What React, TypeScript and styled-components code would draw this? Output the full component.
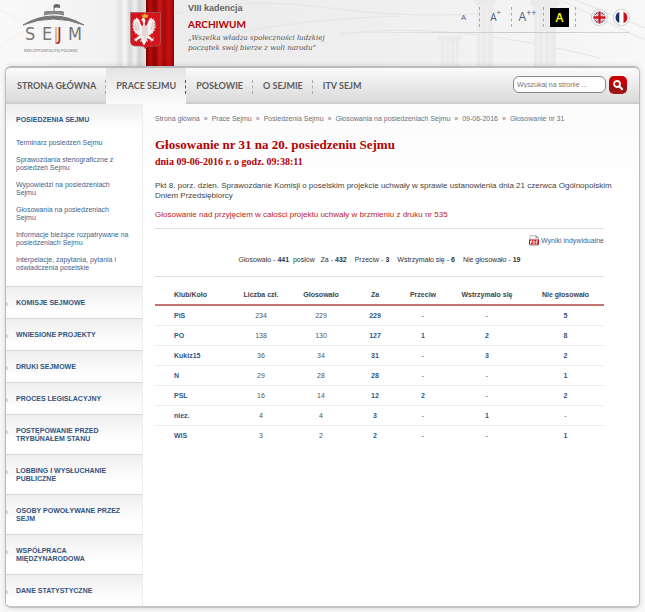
import React from 'react';
import styled, { createGlobalStyle } from 'styled-components';

const sans = '"Liberation Sans", Arial, sans-serif';
const display = 'Lato, "Open Sans", sans-serif';
const blue = '#3f5f8c';
const red = '#b30000';

const GlobalStyle = createGlobalStyle`
  * { box-sizing: border-box; }
  body {
    margin: 0;
    background: #f8f8f8;
    font-family: ${sans};
    font-size: 7px;
    line-height: 8px;
    color: #444;
  }
  a { color: inherit; text-decoration: none; }
  h1, h2, p, ul { margin: 0; padding: 0; }
  ul { list-style: none; }
`;

const Page = styled.div`
  position: relative;
  padding: 0 5px 5px;
`;

const Backdrop = styled.svg`
  position: absolute;
  top: 0;
  right: 0;
  width: 100%;
  height: 104px;
`;

const Header = styled.header`
  position: relative;
  display: flex;
  height: 66px;
`;

const LogoLink = styled.a`
  width: 103px;
  padding-left: 16px;
`;

const BannerArt = styled.svg`
  flex: none;
  width: 66px;
  height: 66px;
`;

const Motto = styled.div`
  flex: 1;
  padding: 3px 0 0 14px;
`;

const Term = styled.p`
  font-weight: 700;
  font-size: 9px;
  line-height: 10px;
  color: #666;
`;

const Archive = styled.p`
  margin-top: 4px;
  font: 700 10px/14px ${display};
  color: ${red};
`;

const Quote = styled.p`
  margin-top: 2px;
  font: italic 7px/10px "DejaVu Serif", serif;
  white-space: nowrap;
  color: #555;
`;

const Tools = styled.div`
  flex: none;
  display: flex;
  align-items: center;
  align-self: flex-start;
  height: 33px;
  width: 290px;
  margin-right: 10px;
  padding-top: 2px;
  justify-content: flex-end;
  border-bottom: 1px solid;
  border-image: linear-gradient(90deg, transparent, #c8c8c8 60%, #d8d8d8) 1;
`;

const SizeButton = styled.button<{ $size: number }>`
  display: flex;
  align-items: center;
  justify-content: center;
  width: 32px;
  height: 20px;
  padding: 0;
  border: 0;
  border-right: 1px dashed #aaa;
  background: none;
  color: ${blue};
  font: ${p => p.$size}px/14px "Open Sans", sans-serif;
  sup { align-self: flex-start; font-size: ${p => p.$size - 3}px; line-height: 12px; }
`;

const ContrastMark = styled.span`
  width: 19px;
  height: 19px;
  background: #000;
  color: #ff0;
  font: 600 12px/19px "Open Sans", sans-serif;
  text-align: center;
`;

const Flags = styled.div`
  display: flex;
  gap: 5px;
  margin-left: 15px;
  svg { display: block; }
`;

const Panel = styled.div`
  position: relative;
  border: 1px solid #bbb;
  border-top-width: 2px;
  border-bottom: 2px solid #c6c6c6;
  border-radius: 6px;
  background: #fff;
  box-shadow: 0 0 5px rgba(0, 0, 0, 0.15);
  overflow: hidden;
`;

const Nav = styled.nav`
  display: flex;
  align-items: center;
  height: 36px;
  padding-left: 1px;
  border-bottom: 2px solid #ccc;
  background: linear-gradient(#fbfbfb, #dadada);
`;

const NavLink = styled.a<{ $active?: boolean }>`
  display: flex;
  align-items: center;
  position: relative;
  height: 36px;
  margin-bottom: -2px;
  padding: 0 10px;
  background: ${p => (p.$active ? 'linear-gradient(#e4e4e4, #fafafa)' : 'none')};
  font: 700 9px/14px ${display};
  color: #5d5d5d;
  &:not(:nth-child(5))::after {
    content: '';
    position: absolute;
    right: 0;
    top: 12px;
    height: 14px;
    border-right: 1px dashed ${p => (p.$active ? '#555' : '#aaa')};
  }
`;

const Search = styled.form`
  display: flex;
  gap: 3px;
  margin: 0 12px 0 auto;
`;

const SearchInput = styled.input`
  width: 93px;
  height: 17px;
  padding: 0 3px;
  border: 1px solid #888;
  border-radius: 6px;
  background: #fff;
  font: 7px/10px ${sans};
  &::placeholder { color: #777; opacity: 1; }
`;

const SearchButton = styled.button`
  width: 18px;
  height: 18px;
  padding: 0;
  border: 0;
  border-radius: 5px;
  background: linear-gradient(#c80000 50%, #8f1212 55%, #a31515);
  svg { display: block; margin: auto; }
`;

const Columns = styled.div`
  display: flex;
`;

const Sidebar = styled.nav`
  flex: none;
  width: 137px;
  border-right: 1px solid #eee;
`;

const Section = styled.section`
  position: relative;
  padding: 12px 10px 11px;
  border-bottom: 1px solid #d6d6d6;
  background: linear-gradient(#eee, #fff 26px);
  &:last-child { border-bottom: 0; }
`;

const SectionLink = styled.a<{ $arrow?: boolean }>`
  display: block;
  font-weight: 700;
  color: #33557f;
  ${p => p.$arrow && `
    &::before {
      content: '';
      position: absolute;
      left: 0;
      top: 14px;
      border: 3px solid transparent;
      border-left-color: #d5d5d5;
      border-right-width: 0;
    }
  `}
`;

const SubList = styled.ul`
  display: flex;
  flex-direction: column;
  gap: 9px;
  padding: 15px 0 3px;
  color: ${blue};
  white-space: pre;
`;

const Main = styled.main`
  flex: 1;
  min-width: 0;
  padding: 11px 35px 20px 12px;
  background: linear-gradient(#fbfbfb, #fff 90px);
`;

const Crumbs = styled.nav`
  display: flex;
  gap: 4px;
  color: #6b7280;
`;

const Title = styled.h1`
  margin-top: 14px;
  font: 700 13px/16px "Liberation Serif", serif;
  color: ${red};
`;

const Subtitle = styled.h2`
  margin-top: 3px;
  font: 700 10px/12px "Liberation Serif", serif;
  color: ${red};
`;

const Lead = styled.p`
  margin-top: 13px;
  font-size: 8px;
  line-height: 10px;
  white-space: pre;
`;

const Subject = styled.p`
  margin: 9px 0 8px;
  font-size: 8px;
  line-height: 10px;
  color: #b22;
`;

const Summary = styled.section`
  display: flex;
  flex-direction: column;
  padding: 6px 0 12px;
  border-top: 1px solid #ddd;
  border-bottom: 1px solid #ddd;
`;

const PdfLink = styled.a`
  display: flex;
  align-items: center;
  align-self: flex-end;
  gap: 2px;
  color: ${blue};
`;

const Totals = styled.p`
  display: flex;
  justify-content: center;
  gap: 8px;
  margin-top: 10px;
  color: #333;
`;

const Results = styled.table`
  width: 100%;
  margin-top: 10px;
  table-layout: fixed;
  border-collapse: collapse;
  text-align: center;
  color: #555;
  th, td { height: 20px; padding: 1px 0 0; }
  thead th { height: 18px; padding: 0 0 1px; color: #444; border-bottom: 2px solid #c47373; }
  tbody tr { border-bottom: 1px solid #eee; }
  tbody tr:last-child { border-bottom: 0; }
  th:first-child { padding-left: 19px; text-align: left; }
  tbody th { color: #33557f; }
`;

const Col = styled.col<{ $w: number }>`
  width: ${p => p.$w}px;
`;

const Count = styled.a`
  font-weight: 700;
  color: #33557f;
`;

const subItems = [
  'Terminarz posiedzeń Sejmu',
  'Sprawozdania stenograficzne z\nposiedzeń Sejmu',
  'Wypowiedzi na posiedzeniach\nSejmu',
  'Głosowania na posiedzeniach\nSejmu',
  'Informacje bieżące rozpatrywane na\nposiedzeniach Sejmu',
  'Interpelacje, zapytania, pytania i\noświadczenia poselskie',
];

const sections = [
  'KOMISJE SEJMOWE', 'WNIESIONE PROJEKTY', 'DRUKI SEJMOWE', 'PROCES LEGISLACYJNY',
  'POSTĘPOWANIE PRZED TRYBUNAŁEM STANU', 'LOBBING I WYSŁUCHANIE PUBLICZNE',
  'OSOBY POWOŁYWANE PRZEZ SEJM', 'WSPÓŁPRACA MIĘDZYNARODOWA', 'DANE STATYSTYCZNE',
];

const crumbs = ['Strona główna', 'Prace Sejmu', 'Posiedzenia Sejmu', 'Głosowania na posiedzeniach Sejmu', '09-06-2016', 'Głosowanie nr 31'];
const navItems = ['STRONA GŁÓWNA', 'PRACE SEJMU', 'POSŁOWIE', 'O SEJMIE', 'ITV SEJM'];
const headings = ['Klub/Koło', 'Liczba czł.', 'Głosowało', 'Za', 'Przeciw', 'Wstrzymało się', 'Nie głosowało'];
const widths = [76, 60, 60, 48, 48, 80, 77];
const rows = [
  ['PiS', '234', '229', '229', '-', '-', '5'],
  ['PO', '138', '130', '127', '1', '2', '8'],
  ['Kukiz15', '36', '34', '31', '-', '3', '2'],
  ['N', '29', '28', '28', '-', '-', '1'],
  ['PSL', '16', '14', '12', '2', '-', '2'],
  ['niez.', '4', '4', '3', '-', '1', '-'],
  ['WiS', '3', '2', '2', '-', '-', '1'],
];

const Pillars = () => (
  <Backdrop viewBox="0 0 645 104" preserveAspectRatio="xMaxYMin slice" aria-hidden="true">
    <defs>
      <linearGradient id="sky" x1="0" x2="1">
        <stop offset="0" stopColor="#f9f9f9" />
        <stop offset=".3" stopColor="#ececec" />
        <stop offset=".6" stopColor="#efefef" />
        <stop offset="1" stopColor="#f8f8f8" />
      </linearGradient>
    </defs>
    <rect width="645" height="104" fill="url(#sky)" />
    <g fill="none" stroke="#e5e5e5">
      <path d="M175 14Q240 -4 330 8T500 12M190 45Q270 20 400 16M340 34Q450 20 600 58M560 0L645 40M575 0L645 28" />
      <path d="M0 46L40 20M0 10L60 40M70 20L108 50" stroke="#f0f0f0" />
    </g>
    <g fill="#ebebeb">
      <path d="M438 36h24v3l-3 3v24h-18V42l-3-3zM474 0h22v3l-3 3v60h-16V6l-3-3zM530 0h30v4l-4 3v59h-22V7l-4-3zM212 52h18v14h-16z" />
    </g>
    <path d="M445 42v24M450 42v24M455 42v24M481 6v60M487 6v60M538 7v59M544 7v59M550 7v59" stroke="#f3f3f3" />
  </Backdrop>
);

const Logo = () => (
  <svg width="72" height="56" viewBox="21 0 72 56" role="img" aria-label="Sejm">
    <path d="M23 25Q53 7 84 25Q53 13 23 25Z" fill="#777" stroke="#777" />
    <path d="M44 15.500v-3q0-1.500 2-1.500h16q2 0 2 1.500v3Q54 13 44 15.500Z" fill="#888" />
    <path d="M54 12V5" stroke="#777" />
    <path d="M54 5q2-2 6 0v3q-3-1-6 0z" fill="#666" />
    <g fill="#777" fontFamily='"DejaVu Sans Condensed", "Open Sans", sans-serif' fontSize="18">
      <text x="25" y="40">S</text>
      <text x="42" y="40">E</text>
      <text x="57" y="40" fill="#b01c24">J</text>
      <text x="68" y="40">M</text>
    </g>
    <path d="M56 27v17" stroke="#d66" />
    <text x="24" y="52" fontSize="4" fill="#666" fontFamily="Open Sans, sans-serif">RZECZYPOSPOLITEJ POLSKIEJ</text>
  </svg>
);

const Banner = () => (
  <BannerArt viewBox="108 0 66 66" aria-hidden="true">
    <defs>
      <linearGradient id="cloth" x1="0" x2="1">
        <stop offset="0" stopColor="#700" />
        <stop offset=".15" stopColor="#b80d0d" />
        <stop offset=".32" stopColor="#8d0505" />
        <stop offset=".5" stopColor="#d01616" />
        <stop offset=".65" stopColor="#a00a0a" />
        <stop offset=".82" stopColor="#ca1111" />
        <stop offset="1" stopColor="#900" />
      </linearGradient>
      <linearGradient id="linen" x1="0" x2="1">
        <stop offset="0" stopColor="#f1f1f1" />
        <stop offset=".2" stopColor="#e3e3e3" />
        <stop offset=".35" stopColor="#f7f7f7" />
        <stop offset=".5" stopColor="#d6d6d6" />
        <stop offset=".65" stopColor="#efefef" />
        <stop offset=".8" stopColor="#d0d0d0" />
        <stop offset="1" stopColor="#e6e6e6" />
      </linearGradient>
    </defs>
    <rect x="114" width="32" height="66" fill="url(#linen)" />
    <rect x="146" width="28" height="66" fill="url(#cloth)" />
    <path d="M130.500 12.500h30v29q0 4-4 4.500h-6q-4 0-5 3-1-3-5-3h-6q-4-.5-4-4.500z" fill="#d4141c" stroke="#a86060" strokeWidth=".7" />
    <path d="M145 18q-2-1-3 1l-1.500 1 2 .8q0 2 .8 3.200l-1 2.500q-2-2-2.500-5-1-3-3.500-4l-.5 2-1.500-1v2.500l-1.500-.5.8 3-1.400 0 1.200 3-1.200.5 1.800 2.500-1 .8 2.400 1.700-.8 1.200 2.900.6-.4 1.400 2.800-.5-3.900 3.800-2.500.3 1.500 1-.8 1.700 2-.9.6 1.600.8-2.500 3.900-1.700-1.500 4 1.700-1 1 2.500 1.300 2 1.300-2 1-2.500 1.700 1-1.500-4 3.900 1.700.8 2.500.6-1.600 2 .9-.8-1.700 1.500-1-2.500-.3-3.900-3.800 2.800.5-.4-1.400 2.900-.6-.8-1.200 2.400-1.700-1-.8 1.800-2.500-1.200-.5 1.200-3h-1.400l.8-3-1.500.5V18.500l-1.500 1-.5-2q-2.500 1-3.500 4-.5 3-2.500 5l-1-2.500q1.500-3 .2-5-.5-1.500-2-1z" fill="#f1efef" />
    <path d="M137 22l2 8M135 23l2 7M133.500 25l3 6M153 22l-2 8M155 23l-2 7M156.500 25l-3 6M145 25v14M143 27v9M147 27v9" stroke="#c88b8b" strokeWidth=".5" fill="none" />
    <path d="M142.500 17.500l-.5-3 1.500 1 1.500-2 1.500 2 1.500-1-.5 3zM135.500 38l2-1.500M154.500 38l-2-1.500" fill="#eab12c" stroke="#dda32b" strokeWidth=".5" />
  </BannerArt>
);

const UkFlag = () => (
  <svg width="17" height="17" viewBox="0 0 17 17" role="img" aria-label="English">
    <clipPath id="uk"><circle cx="8.500" cy="8.500" r="6" /></clipPath>
    <circle cx="8.500" cy="8.500" r="8" fill="#fff" stroke="#ccc" />
    <g clipPath="url(#uk)">
      <path d="M0 0h17v17H0z" fill="#274079" />
      <path d="M1 3l15 11M16 3L1 14" stroke="#fff" strokeWidth="2.500" />
      <path d="M1 3l15 11M16 3L1 14" stroke="#c22" />
      <path d="M8.500 0v17M0 8.500h17" stroke="#fff" strokeWidth="4" />
      <path d="M8.500 0v17M0 8.500h17" stroke="#c9151b" strokeWidth="2.400" />
    </g>
  </svg>
);

const FrFlag = () => (
  <svg width="17" height="17" viewBox="0 0 17 17" role="img" aria-label="Français">
    <clipPath id="fr"><circle cx="8.500" cy="8.500" r="6" /></clipPath>
    <circle cx="8.500" cy="8.500" r="8" fill="#fff" stroke="#ccc" />
    <g clipPath="url(#fr)">
      <path d="M2 0h4.500v17H2z" fill="#1b2f6b" />
      <path d="M6.500 0h4v17h-4z" fill="#fff" />
      <path d="M10.500 0H15v17h-4.500z" fill="#c8141c" />
    </g>
  </svg>
);

const PdfIcon = () => (
  <svg width="10" height="11" viewBox="0 0 10 11" aria-hidden="true">
    <path d="M1 .5h5.500L9.500 3v7.500H1z" fill="#f2f2f2" stroke="#aaa" strokeWidth=".7" />
    <path d="M6.500 0v3H10" fill="#999" />
    <path d="M0 4.500h10v5H0z" fill="#c40f1d" />
    <path d="M1.500 9V5.800H3v1.500H1.500M4.300 5.800v2.700H5q1-.2 1-1.300T5 5.800zM7.300 9V5.800H9M7.300 7.300h1.300" fill="none" stroke="#fff" strokeWidth=".8" />
  </svg>
);

export default function App() {
  return (
    <Page>
      <GlobalStyle />
      <Pillars />
      <Header>
        <LogoLink href="#"><Logo /></LogoLink>
        <Banner />
        <Motto>
          <Term>VIII kadencja</Term>
          <Archive>ARCHIWUM</Archive>
          <Quote>„Wszelka władza społeczności ludzkiej<br />początek swój bierze z woli narodu”</Quote>
        </Motto>
        <Tools>
          <SizeButton $size={8}>A</SizeButton>
          <SizeButton $size={10}>A<sup>+</sup></SizeButton>
          <SizeButton $size={12}>A<sup>++</sup></SizeButton>
          <SizeButton $size={12} aria-label="Wysoki kontrast"><ContrastMark>A</ContrastMark></SizeButton>
          <Flags>
            <a href="#"><UkFlag /></a>
            <a href="#"><FrFlag /></a>
          </Flags>
        </Tools>
      </Header>
      <Panel>
        <Nav>
          {navItems.map((item, i) => <NavLink key={item} href="#" $active={i === 1}>{item}</NavLink>)}
          <Search onSubmit={e => e.preventDefault()}>
            <SearchInput type="text" placeholder="Wyszukaj na stronie ..." aria-label="Wyszukaj na stronie" />
            <SearchButton type="submit" aria-label="Szukaj">
              <svg width="12" height="12" viewBox="0 0 12 12" fill="none" stroke="#fff" strokeWidth="1.800" strokeLinecap="round">
                <circle cx="5" cy="5" r="3" />
                <path d="M7.500 7.500L10 10" strokeWidth="2.200" />
              </svg>
            </SearchButton>
          </Search>
        </Nav>
        <Columns>
          <Sidebar>
            <Section>
              <SectionLink href="#">POSIEDZENIA SEJMU</SectionLink>
              <SubList>
                {subItems.map(item => <li key={item}><a href="#">{item}</a></li>)}
              </SubList>
            </Section>
            {sections.map(item => (
              <Section key={item}><SectionLink href="#" $arrow>{item}</SectionLink></Section>
            ))}
          </Sidebar>
          <Main>
            <Crumbs>
              {crumbs.map((item, i) => (
                <React.Fragment key={item}>
                  {i > 0 && <span>»</span>}
                  <a href="#">{item}</a>
                </React.Fragment>
              ))}
            </Crumbs>
            <Title>Głosowanie nr 31 na 20. posiedzeniu Sejmu</Title>
            <Subtitle>dnia 09-06-2016 r. o godz. 09:38:11</Subtitle>
            <Lead>Pkt 8. porz. dzien. Sprawozdanie Komisji o poselskim projekcie uchwały w sprawie ustanowienia dnia 21 czerwca Ogólnopolskim<br />Dniem Przedsiębiorcy</Lead>
            <Subject>Głosowanie nad przyjęciem w całości projektu uchwały w brzmieniu z druku nr 535</Subject>
            <Summary>
              <PdfLink href="#"><PdfIcon />Wyniki indywidualne</PdfLink>
              <Totals>
                <span>Głosowało - <b>441</b>&nbsp; posłów&nbsp;&nbsp; Za - <b>432</b></span>
                <span>Przeciw - <b>3</b></span>
                <span>Wstrzymało się - <b>6</b></span>
                <span>Nie głosowało - <b>19</b></span>
              </Totals>
            </Summary>
            <Results>
              <colgroup>{widths.map((w, i) => <Col key={i} $w={w} />)}</colgroup>
              <thead>
                <tr>{headings.map(h => <th key={h} scope="col">{h}</th>)}</tr>
              </thead>
              <tbody>
                {rows.map(([club, ...cells]) => (
                  <tr key={club}>
                    <th scope="row"><a href="#">{club}</a></th>
                    {cells.map((c, i) => (
                      <td key={i}>{i > 1 && c !== '-' ? <Count href="#">{c}</Count> : c}</td>
                    ))}
                  </tr>
                ))}
              </tbody>
            </Results>
          </Main>
        </Columns>
      </Panel>
    </Page>
  );
}
